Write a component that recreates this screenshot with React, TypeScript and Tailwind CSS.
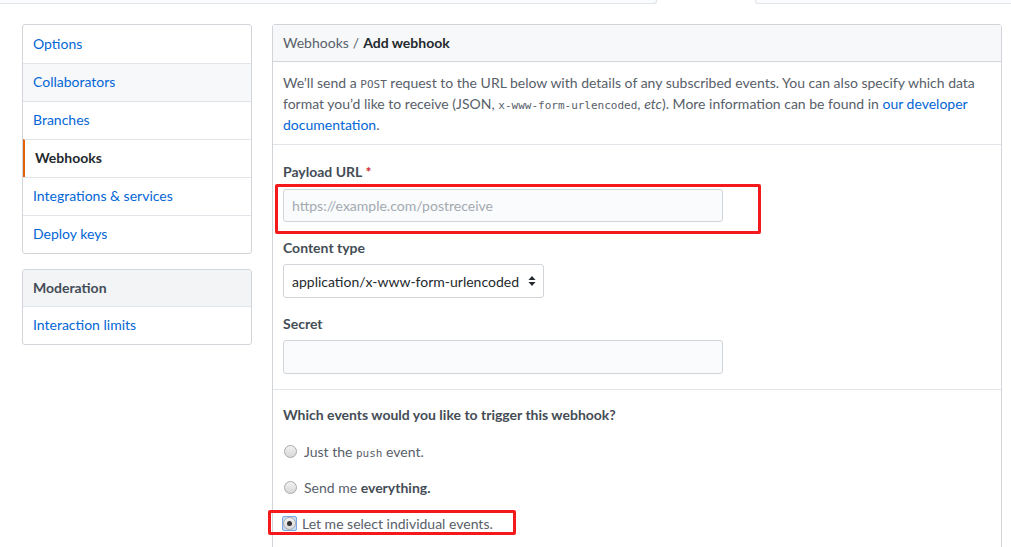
import React from "react";

const font = { fontFamily: 'Lato, "Liberation Sans", sans-serif' };
const mono = { fontFamily: '"DejaVu Sans Mono", monospace' };

const navItems = [
	{ label: "Options" },
	{ label: "Collaborators", hover: true },
	{ label: "Branches" },
	{ label: "Webhooks", selected: true },
	{ label: "Integrations & services" },
	{ label: "Deploy keys" },
];

const Radio = ({ checked }: { checked?: boolean }) => (
	<span
		className={`relative inline-flex items-center justify-center w-[15px] h-[15px] ${
			checked ? "rounded-[2px] bg-[#c5dcf8] border border-[#7aa7e0]" : ""
		}`}
	>
		<span className="w-[13px] h-[13px] rounded-full border border-[#a9a9a9] bg-gradient-to-b from-[#f2f2f2] to-[#d8d8d8] flex items-center justify-center">
			{checked ? <span className="w-[5px] h-[5px] rounded-full bg-[#333]" /> : null}
		</span>
	</span>
);

const App = () => {
	return (
		<div className="w-[1011px] h-[547px] bg-white overflow-hidden text-[14px] text-[#24292e]" style={font}>
			{/* tab strip */}
			<div className="flex h-[4px]">
				<div className="w-[657px] bg-[#fafbfc] border-b border-r border-[#e1e4e8] rounded-br-[3px]" />
				<div className="w-[98px]" />
				<div className="flex-1 bg-[#fafbfc] border-b border-l border-[#e1e4e8] rounded-bl-[3px]" />
			</div>

			<div className="flex gap-[20px] pl-[22px] pt-[20px]">
				{/* sidebar */}
				<div className="w-[230px] flex flex-col gap-[15px]">
					<nav className="border border-[#d1d5da] rounded-[3px] overflow-hidden">
						{navItems.map((item, i) => (
							<div
								key={item.label}
								className={`h-[38px] flex items-center pl-[10px] pb-[2px] ${i > 0 ? "border-t border-[#e1e4e8]" : "h-[37px]"} ${
									item.hover ? "bg-[#f6f8fa]" : ""
								} ${
									item.selected
										? "font-bold text-[#24292e] border-l-2 border-l-[#e36209] pl-[8px]"
										: "text-[#0366d6]"
								}`}
							>
								{item.label}
							</div>
						))}
					</nav>
					<nav className="border border-[#d1d5da] rounded-[3px] overflow-hidden">
						<div className="h-[37px] flex items-center pl-[10px] pb-[2px] bg-[#f3f4f6] font-bold text-[#444d56] border-b border-[#e1e4e8]">
							Moderation
						</div>
						<div className="h-[37px] flex items-center pl-[10px] pb-[2px] text-[#0366d6]">Interaction limits</div>
					</nav>
				</div>

				{/* main panel */}
				<div className="w-[730px] border border-[#d1d5da] rounded-t-[3px] relative">
					<div className="h-[37px] bg-[#f6f8fa] border-b border-[#d1d5da] flex items-center px-[10px] pb-[1px]">
						<span className="text-[#586069]">Webhooks</span>
						<span className="text-[#586069] mx-[4px]">/</span>
						<span className="font-bold">Add webhook</span>
					</div>

					<div className="px-[10px] pt-[10px] pb-[9px] leading-[21px] text-[#586069] border-b border-[#e1e4e8]">
						We’ll send a <code className="text-[11px] leading-none" style={mono}>POST</code> request to the URL below with
						details of any subscribed events. You can also specify which data format you’d like to receive (JSON,{" "}
						<code className="text-[11px] leading-none" style={mono}>x-www-form-urlencoded</code>, <em>etc</em>). More
						information can be found in <span className="text-[#0366d6]">our developer documentation</span>.
					</div>

					<div className="relative px-[10px] pt-[17px] pb-[15px] border-b border-[#e1e4e8] flex flex-col">
						<label className="font-bold text-[#444d56] leading-[20px]">
							Payload URL <span className="text-[#cb2431]">*</span>
						</label>
						<div className="mt-[7px] w-[440px] h-[33px] rounded-[3px] border border-[#d1d5da] bg-[#fafbfc] flex items-center px-[8px] text-[#a3aab1]">
							https://example.com/postreceive
						</div>

						<label className="mt-[16px] font-bold text-[#444d56] leading-[20px]">Content type</label>
						<div className="mt-[6px] w-[261px] h-[34px] rounded-[3px] border border-[#d1d5da] bg-white flex items-center justify-between pl-[8px] pr-[7px] text-[#24292e] whitespace-nowrap">
							<span>application/x-www-form-urlencoded</span>
							<svg width="8" height="12" viewBox="0 0 8 12">
								<path d="M4 1 L7.5 5 H0.5 Z" fill="#24292e" />
								<path d="M4 11 L7.5 7 H0.5 Z" fill="#24292e" />
							</svg>
						</div>

						<label className="mt-[16px] font-bold text-[#444d56] leading-[20px]">Secret</label>
						<div className="mt-[6px] w-[440px] h-[34px] rounded-[3px] border border-[#d1d5da] bg-[#fafbfc]" />

						{/* annotation */}
						<div className="absolute left-[2px] top-[39px] w-[486px] h-[50px] border-[3px] border-[#f5191c] rounded-[2px]" />
					</div>

					<div className="relative px-[10px] pt-[15px] pb-[60px]">
						<div className="font-bold text-[#444d56] leading-[20px]">Which events would you like to trigger this webhook?</div>
						<div className="mt-[16px] flex items-center gap-[6px] text-[#586069] h-[20px]">
							<Radio />
							<span>
								Just the <code className="text-[11px] leading-none" style={mono}>push</code> event.
							</span>
						</div>
						<div className="mt-[16px] flex items-center gap-[6px] text-[#586069] h-[20px]">
							<Radio />
							<span>
								Send me <span className="font-bold text-[#444d56]">everything.</span>
							</span>
						</div>
						<div className="mt-[16px] flex items-center gap-[5px] text-[#586069] h-[20px] -ml-[1px]">
							<Radio checked />
							<span>Let me select individual events.</span>
						</div>

						{/* annotation */}
						<div className="absolute left-[-5px] top-[120px] w-[248px] h-[25px] border-[3px] border-[#f5191c] rounded-[2px]" />
					</div>
				</div>
			</div>
		</div>
	);
};

export default App;
